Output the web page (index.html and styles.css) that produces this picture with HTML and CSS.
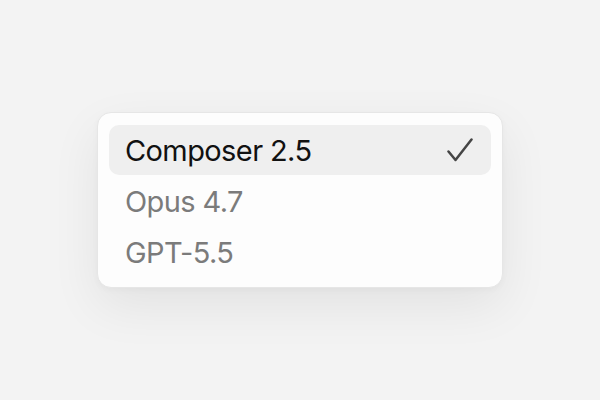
FILE: index.html
```html
<!DOCTYPE html>
<html>
<head>
<meta charset="utf-8">
<link rel="stylesheet" href="styles.css">
</head>
<body>
<div class="stage">
  <div class="menu">
    <div class="item selected">
      <span class="label">Composer 2.5</span>
      <svg class="check" width="26" height="24" viewBox="0 0 26 24"><path d="M1.5 13.5 L8.5 22 L24.5 1.5" fill="none" stroke="#454545" stroke-width="2.5" stroke-linecap="round" stroke-linejoin="round"/></svg>
    </div>
    <div class="item"><span class="label">Opus 4.7</span></div>
    <div class="item"><span class="label">GPT-5.5</span></div>
  </div>
</div>
</body>
</html>
```
FILE: styles.css
```css
html, body {
  margin: 0;
  padding: 0;
}
body {
  width: 600px;
  height: 400px;
  background: #f3f3f3;
  font-family: Inter, "Liberation Sans", sans-serif;
  overflow: hidden;
}
.stage {
  width: 600px;
  height: 400px;
  display: flex;
  align-items: center;
  justify-content: center;
}
.menu {
  width: 382px;
  padding: 12px 11px 10px 11px;
  background: #fdfdfd;
  border: 1px solid #e6e6e6;
  border-radius: 14px;
  box-shadow: 0 18px 50px rgba(0,0,0,0.07), 0 2px 6px rgba(0,0,0,0.03);
  display: flex;
  flex-direction: column;
  gap: 1px;
}
.item {
  height: 50px;
  display: flex;
  align-items: center;
  justify-content: space-between;
  padding: 0 18px 0 16px;
  border-radius: 10px;
  font-size: 29px;
  color: #7b7b7b;
  letter-spacing: -0.6px;
}
.item.selected {
  background: #efefef;
  color: #111;
}
.check {
  display: block;
}
```
